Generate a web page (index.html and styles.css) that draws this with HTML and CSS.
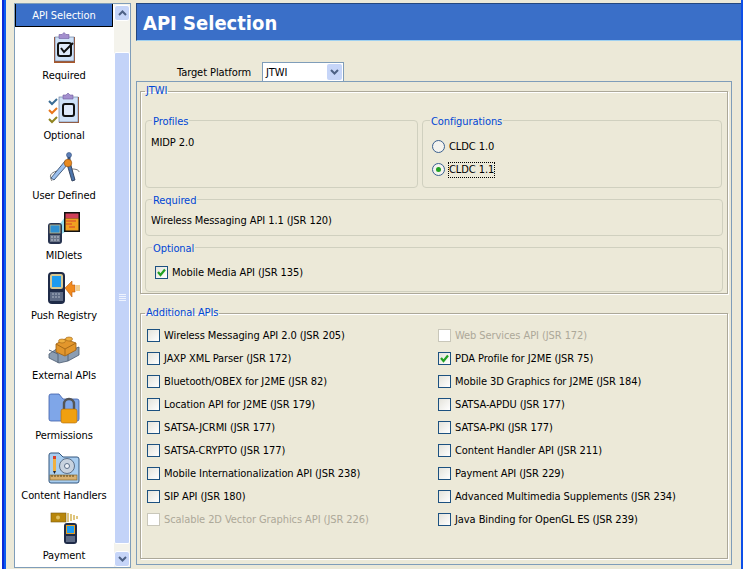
FILE: index.html
```html
<!DOCTYPE html>
<html lang="en">
<head>
<meta charset="utf-8">
<title>API Selection</title>
<link rel="stylesheet" href="styles.css">
</head>
<body>
<div class="edge-left"><span></span><span></span><span></span></div>
<div class="sidebar-wrap">
  <aside class="sidebar">
    <div class="list">
      <div class="list-head">API Selection</div>
      <div class="item">
        <svg class="ico" viewBox="0 0 32 32"><rect x="6" y="5" width="21" height="26" fill="#a9572a"/><rect x="7" y="5" width="19" height="24" fill="#cfe2f8" stroke="#5a6f92" stroke-width=".6"/><path d="M11 2.500h3l2-2 2 2h3v4H11z" fill="#a38fce" stroke="#6f5aa0" stroke-width=".6"/><rect x="10" y="11" width="13" height="13" rx="2" fill="#dfeafa" stroke="#111" stroke-width="2"/><path d="M13 16l3 4 9-9" fill="none" stroke="#111" stroke-width="2"/></svg>
        <span>Required</span>
      </div>
      <div class="item">
        <svg class="ico" viewBox="0 0 32 32"><rect x="11" y="5" width="20" height="26" fill="#a9572a"/><rect x="11" y="5" width="19" height="25" fill="#cfe2f8" stroke="#5a6f92" stroke-width=".6"/><path d="M15 3h3l2-2 2 2h3v4H15z" fill="#a38fce" stroke="#6f5aa0" stroke-width=".6"/><rect x="15" y="12" width="11" height="12" rx="2" fill="#dfeafa" stroke="#111" stroke-width="2"/><path d="M1 9l3 3 5-5" fill="none" stroke="#3a6c94" stroke-width="2"/><path d="M1 18l3 3 5-5" fill="none" stroke="#e8751a" stroke-width="2"/><path d="M1 27l3 3 5-5" fill="none" stroke="#8f8420" stroke-width="2"/></svg>
        <span>Optional</span>
      </div>
      <div class="item">
        <svg class="ico" viewBox="0 0 32 32"><path d="M4 29c-3-5-2-8 5-10M24 17c4 0 7 1 7 3" fill="none" stroke="#777" stroke-width="1"/><path d="M17 9L3 26l3 2 14-16z" fill="#9cc0ee" stroke="#39506f" stroke-width=".9"/><path d="M19 12l5 17 3-1-5-18z" fill="#4d76ad" stroke="#2c3c58" stroke-width=".9"/><circle cx="21" cy="3" r="2.500" fill="#5d7fb8" stroke="#34507c" stroke-width=".6"/><rect x="19.500" y="5" width="3" height="5" fill="#34507c"/><circle cx="20" cy="11" r="3.800" fill="#e88a1f" stroke="#8c4d10" stroke-width=".6"/></svg>
        <span>User Defined</span>
      </div>
      <div class="item">
        <svg class="ico" viewBox="0 0 32 32"><path d="M8 17L17 5v15L9 25z" fill="#7fd4ea" opacity=".85"/><rect x="0" y="11" width="14" height="21" rx="3" fill="#27334f"/><rect x="2" y="13" width="10" height="8" fill="#2f8fd0" stroke="#c8b880" stroke-width=".8"/><path d="M2 23h10v7H2z" fill="#6a7588"/><path d="M3 25h8M3 28h8" stroke="#c0c8d4" stroke-dasharray="2 1"/><rect x="16" y="0" width="16" height="20" fill="#111"/><rect x="17.500" y="1.500" width="13" height="5" fill="#d0405a"/><rect x="17.500" y="6.500" width="13" height="12" fill="#f0a020"/><path d="M18 9h10M18 12h6M21 15h6" stroke="#d8402a"/></svg>
        <span>MIDlets</span>
      </div>
      <div class="item">
        <svg class="ico" viewBox="0 0 32 32"><rect x="0" y="0" width="17" height="32" rx="4" fill="#1f2b48"/><rect x="2" y="2" width="13" height="15" rx="2" fill="#d8c890"/><rect x="4" y="4" width="9" height="11" fill="#1d9bf0"/><path d="M2 20h13v9H2z" fill="#5d6a84"/><path d="M4 22h9M4 25h9" stroke="#b0b8c8" stroke-dasharray="2 1"/><path d="M17 16l7-7v4h3v7h-3v5z" fill="#f28a1c" stroke="#b85a10" stroke-width=".6"/><path d="M29 13v6M31 13v6" stroke="#e8a020"/></svg>
        <span>Push Registry</span>
      </div>
      <div class="item">
        <svg class="ico" viewBox="0 0 32 32"><path d="M1 22l9-6 10 3 11-4v8l-11 6-9 2-10-5z" fill="#8b9db2" stroke="#4a5a70" stroke-width=".8"/><path d="M10 31v-9l-9-4M20 29v-8" stroke="#556479" fill="none"/><path d="M8 12l9-5 11 4v7l-11 6-9-4z" fill="#e2962c" stroke="#9c5e10" stroke-width=".8"/><path d="M8 12l9 5 11-6M17 17v7" stroke="#a86a18" fill="none"/><ellipse cx="14" cy="9" rx="3.500" ry="2" fill="#f0b040" stroke="#9c5e10" stroke-width=".6"/><ellipse cx="21" cy="7" rx="3.500" ry="2" fill="#f0b040" stroke="#9c5e10" stroke-width=".6"/></svg>
        <span>External APIs</span>
      </div>
      <div class="item">
        <svg class="ico" viewBox="0 0 32 32"><path d="M1 4q0-2 2-2h8l4 5h14q2 0 2 2v18q0 2-2 2H3q-2 0-2-2z" fill="#7fa6e8" stroke="#3d5ea8" stroke-width=".8"/><path d="M16 18v-6a5 5 0 0 1 10 0v6" fill="none" stroke="#555" stroke-width="2.400"/><rect x="13" y="17" width="16" height="14" rx="2" fill="#f0a010" stroke="#b06a08" stroke-width=".6"/></svg>
        <span>Permissions</span>
      </div>
      <div class="item">
        <svg class="ico" viewBox="0 0 32 32"><path d="M1 3q0-2 2-2h8l4 4h14q2 0 2 2v22q0 2-2 2H3q-2 0-2-2z" fill="#a8cdf0" stroke="#33577f" stroke-width="1"/><circle cx="19" cy="14" r="7.500" fill="#c8d2de" stroke="#5c6f88" stroke-width="1"/><circle cx="19" cy="14" r="2.500" fill="#eef2f8" stroke="#5c6f88" stroke-width="1"/><rect x="5" y="5" width="3" height="14" fill="#f0b040"/><rect x="5" y="4" width="3" height="3" fill="#d8402a"/><path d="M5 19h3l-1.500 3z" fill="#222"/><rect x="2" y="23" width="27" height="5" fill="#d8b070" stroke="#7c5c20" stroke-width=".6"/><path d="M4 23v2M7 23v2M10 23v2M13 23v2M16 23v2M19 23v2M22 23v2M25 23v2" stroke="#5a4418"/></svg>
        <span>Content Handlers</span>
      </div>
      <div class="item">
        <svg class="ico" viewBox="0 0 32 32"><rect x="3" y="1" width="15" height="9" fill="#b8860b" stroke="#7a5a10" stroke-width=".6"/><circle cx="10" cy="5.500" r="2" fill="#e0c060"/><path d="M20 1v9M23 2v7M26 3v5M29 4v3" stroke="#d8b860" stroke-width="1.600"/><rect x="16" y="11" width="13" height="21" rx="3" fill="#1f2b48"/><rect x="18" y="13" width="9" height="9" fill="#e8a020"/><rect x="19" y="14" width="7" height="7" fill="#1d9bf0"/><path d="M18 24h9v6h-9z" fill="#5d6a84"/></svg>
        <span>Payment</span>
      </div>
    </div>
    <div class="scrollbar">
      <div class="sb-btn"><svg viewBox="0 0 9 6" class="chev"><path d="M1 5l3.500-3.500L8 5" fill="none" stroke="#4d6185" stroke-width="2"/></svg></div>
      <div class="sb-track">
        <div class="sb-thumb"><div class="grip"><i></i><i></i><i></i><i></i></div></div>
      </div>
      <div class="sb-btn"><svg viewBox="0 0 9 6" class="chev"><path d="M1 1l3.500 3.500L8 1" fill="none" stroke="#4d6185" stroke-width="2"/></svg></div>
    </div>
  </aside>
</div>
<main class="main">
  <h1 class="title">API Selection</h1>
  <div class="platform">
    <label class="platform-label">Target Platform</label>
    <div class="combo"><span class="combo-val">JTWI</span><span class="combo-btn"><svg viewBox="0 0 9 6" class="chev"><path d="M1 1l3.500 3.500L8 1" fill="none" stroke="#4d6185" stroke-width="2"/></svg></span></div>
  </div>
  <div class="outer">
    <fieldset class="etched jtwi">
      <legend>JTWI</legend>
      <div class="top-row">
        <fieldset class="soft profiles"><legend>Profiles</legend><div>MIDP 2.0</div></fieldset>
        <fieldset class="soft configs"><legend>Configurations</legend>
          <div class="radio"><i class="rb"></i><span>CLDC 1.0</span></div>
          <div class="radio"><i class="rb on"></i><span class="focus">CLDC 1.1</span></div>
        </fieldset>
      </div>
      <fieldset class="soft required"><legend>Required</legend><div>Wireless Messaging API 1.1 (JSR 120)</div></fieldset>
      <fieldset class="soft optional"><legend>Optional</legend>
        <div class="cb"><i class="box on"><svg viewBox="0 0 11 11"><path d="M2 5l2.500 3L9 2.500" fill="none" stroke="#21a121" stroke-width="2.200"/></svg></i><span>Mobile Media API (JSR 135)</span></div>
      </fieldset>
    </fieldset>
    <fieldset class="etched additional">
      <legend>Additional APIs</legend>
      <div class="grid">
        <div class="cb"><i class="box"></i><span>Wireless Messaging API 2.0 (JSR 205)</span></div>
        <div class="cb off"><i class="box"></i><span>Web Services API (JSR 172)</span></div>
        <div class="cb"><i class="box"></i><span>JAXP XML Parser (JSR 172)</span></div>
        <div class="cb"><i class="box on"><svg viewBox="0 0 11 11"><path d="M2 5l2.500 3L9 2.500" fill="none" stroke="#21a121" stroke-width="2.200"/></svg></i><span>PDA Profile for J2ME (JSR 75)</span></div>
        <div class="cb"><i class="box"></i><span>Bluetooth/OBEX for J2ME (JSR 82)</span></div>
        <div class="cb"><i class="box"></i><span>Mobile 3D Graphics for J2ME (JSR 184)</span></div>
        <div class="cb"><i class="box"></i><span>Location API for J2ME (JSR 179)</span></div>
        <div class="cb"><i class="box"></i><span>SATSA-APDU (JSR 177)</span></div>
        <div class="cb"><i class="box"></i><span>SATSA-JCRMI (JSR 177)</span></div>
        <div class="cb"><i class="box"></i><span>SATSA-PKI (JSR 177)</span></div>
        <div class="cb"><i class="box"></i><span>SATSA-CRYPTO (JSR 177)</span></div>
        <div class="cb"><i class="box"></i><span>Content Handler API (JSR 211)</span></div>
        <div class="cb"><i class="box"></i><span>Mobile Internationalization API (JSR 238)</span></div>
        <div class="cb"><i class="box"></i><span>Payment API (JSR 229)</span></div>
        <div class="cb"><i class="box"></i><span>SIP API (JSR 180)</span></div>
        <div class="cb"><i class="box"></i><span>Advanced Multimedia Supplements (JSR 234)</span></div>
        <div class="cb off"><i class="box"></i><span>Scalable 2D Vector Graphics API (JSR 226)</span></div>
        <div class="cb"><i class="box"></i><span>Java Binding for OpenGL ES (JSR 239)</span></div>
      </div>
    </fieldset>
  </div>
</main>
<div class="edge-right"></div>
</body>
</html>
```
FILE: styles.css
```css
* { box-sizing: border-box; }
html, body { height: 100%; }
body {
  margin: 0;
  height: 569px;
  overflow: hidden;
  display: flex;
  background: #ece9d8;
  color: #000;
  font: 11px/14px "DejaVu Sans Condensed", "DejaVu Sans", sans-serif;
  font-stretch: condensed;
  letter-spacing: -0.08px;
}
.edge-left { display: flex; width: 6px; flex: none; }
.edge-left span:nth-child(1) { width: 2px; background: #fff; }
.edge-left span:nth-child(2) { width: 2px; background: #0a2ad8; }
.edge-left span:nth-child(3) { width: 2px; background: #0d5cf0; }
.edge-right { width: 2px; flex: none; background: #0d4fe8; }

.sidebar-wrap { width: 125px; flex: none; padding: 3px 0 1px 8px; }
.sidebar { display: flex; height: 100%; border: 1px solid #7f9db9; background: #fff; }
.list { width: 98px; margin-right: 1px; overflow: hidden; flex: none; }
.list-head {
  height: 23px;
  padding-top: 1px;
  background: #3a6fc8;
  color: #fff;
  text-align: center;
  border: solid #000;
  border-width: 0 1px 1px;
  line-height: 22px;
}
.item { height: 60px; display: flex; flex-direction: column; align-items: center; padding-top: 5px; white-space: nowrap; }
.ico { width: 32px; height: 32px; flex: none; margin-bottom: 5px; }
.scrollbar { flex: 1; display: flex; flex-direction: column; padding: 1px 0 0; background: #f4f3ec; }
.sb-btn { height: 16px; flex: none; background: #c6d5f8; border: 1px solid #fff; border-radius: 3px; display: flex; align-items: center; justify-content: center; }
.chev { width: 9px; height: 6px; }
.sb-track { flex: 1; padding: 31px 0 7px; display: flex; }
.sb-thumb { flex: 1; background: #c3d3f8; border: 1px solid #fff; border-radius: 2px; display: flex; align-items: center; justify-content: center; }
.grip i { display: block; width: 7px; height: 1px; background: #eef3fe; margin-bottom: 1px; }

.main { flex: 1; min-width: 0; padding: 3px 0 0 5px; }
.title {
  margin: 0;
  height: 38px;
  background: #3a6fc8;
  color: #fff;
  font: bold 20px/39px "DejaVu Sans Condensed", "DejaVu Sans", sans-serif;
  font-stretch: condensed;
  letter-spacing: 0;
  padding-left: 6px;
  border-top: 1px solid #24477f;
  border-left: 1px solid #24477f;
  border-bottom: 1px solid #9fd0f0;
}
.platform { display: flex; align-items: center; height: 21px; margin-top: 20px; padding-left: 41px; }
.platform-label { width: 85px; white-space: nowrap; padding-top: 2px; }
.combo { width: 82px; height: 20px; background: #fff; border: 1px solid #7f9db9; display: flex; align-items: center; padding: 0 1px 0 3px; }
.combo-val { flex: 1; padding-top: 2px; }
.combo-btn { width: 15px; height: 16px; background: #c6d5f8; border-radius: 2px; display: flex; align-items: center; justify-content: center; }

.outer { width: 596px; height: 484px; border: 1px solid #7f9db9; padding: 8px 3px 0; margin-top: -1px; }
fieldset { margin: 0; min-width: 0; }
legend { padding: 0 1px; color: #0046d5; line-height: 14px; }
.etched { border: 1px solid #aca899; box-shadow: 1px 1px 0 #fff, inset 1px 1px 0 #fff; width: 588px; padding: 0; }
.etched > legend { margin-left: 4px; }
.jtwi { height: 210px; padding: 13px 5px 0 4px; margin-top: -6px; }
.jtwi > legend { margin-left: 0; }
.additional { height: 253px; margin-top: 12px; }
.soft { border: 1px solid #d0d0bf; border-radius: 4px; padding: 0; }
.soft > legend { padding-top: 4px; }
.top-row { display: flex; gap: 4px; }
.profiles { width: 273px; height: 77px; padding: 0 0 0 5px; }
.profiles > legend { margin-left: 1px; }
.configs { width: 300px; height: 77px; padding: 0 0 0 9px; }
.configs > legend { margin-left: -2px; }
.required { height: 46px; margin-top: 2px; padding: 6px 0 0 5px; width: 578px; }
.required > legend { margin-left: 1px; }
.optional { height: 54px; margin-top: 2px; padding: 5px 0 0 9px; width: 578px; }
.optional > legend { margin-left: -3px; }
.profiles > div { margin-top: 7px; }

.radio { display: flex; align-items: center; height: 23px; gap: 4px; }
.radio:first-of-type { margin-top: 6px; }
.rb { width: 13px; height: 13px; border-radius: 50%; border: 1px solid #3a5f8f; background: #f4f3ee; display: flex; align-items: center; justify-content: center; }
.rb.on::after { content: ""; width: 5px; height: 5px; border-radius: 50%; background: #21a121; }
.focus { outline: 1px dotted #000; outline-offset: 0; }

.cb { display: flex; align-items: center; height: 23px; gap: 4px; white-space: nowrap; }
.box { width: 13px; height: 13px; flex: none; border: 1px solid #1c5180; background: linear-gradient(135deg, #e4e3db, #fff); display: block; }
.box svg { display: block; width: 11px; height: 11px; }
.off { color: #aca899; }
.off .box { border-color: #c9c7ba; background: #fff; }
.grid { display: grid; grid-template-columns: 291px 1fr; grid-auto-rows: 23px; padding: 4px 0 0 6px; }
```
